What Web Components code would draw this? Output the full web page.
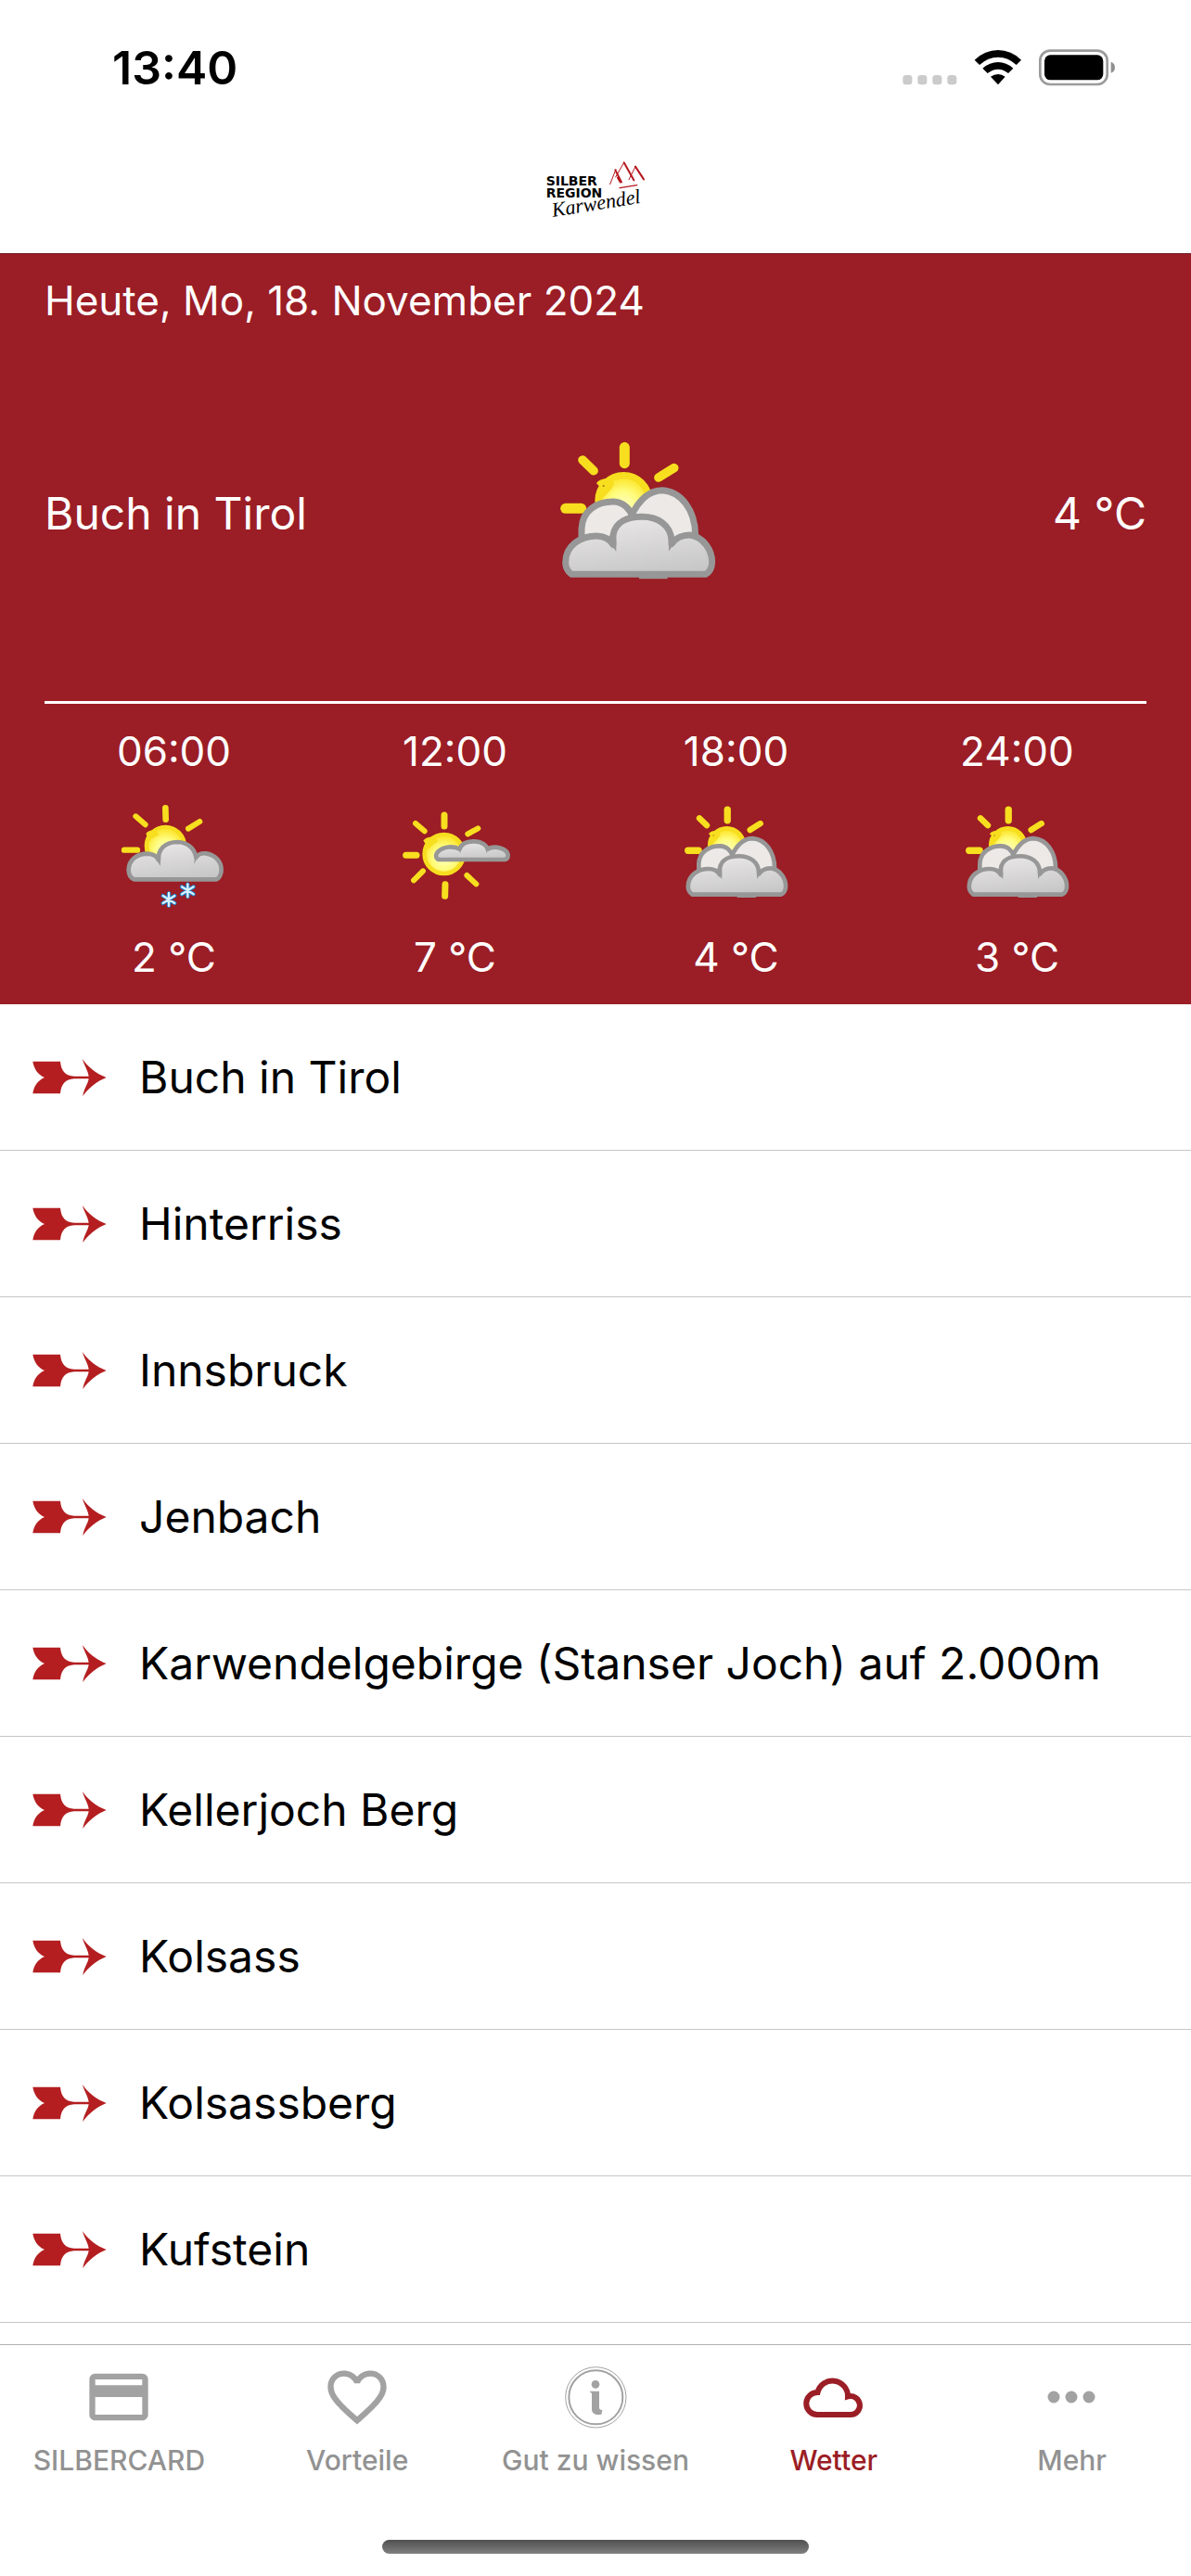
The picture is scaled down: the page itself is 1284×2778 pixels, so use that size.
<!DOCTYPE html>
<html lang="de">
<head>
<meta charset="utf-8">
<meta name="viewport" content="width=device-width, initial-scale=1">
<title>Wetter</title>
<style>
  body {
    margin: 0;
    background: #fff;
    color: #000;
    font-family: Inter, "Liberation Sans", sans-serif;
  }
</style>
</head>
<body>
<weather-app></weather-app>

<script>
// Helper: attach an open shadow root filled from a template
function render(host, html) {
  const template = document.createElement("template");
  template.innerHTML = html;
  host.attachShadow({ mode: "open" });
  host.shadowRoot.appendChild(template.content.cloneNode(true));
}

const SUN_FILL = `
  <radialGradient id="sun" cx="50%" cy="60%" r="50%">
    <stop offset="0" stop-color="#ffffc4"/>
    <stop offset="0.6" stop-color="#fffc7c"/>
    <stop offset="1" stop-color="#fde93a"/>
  </radialGradient>
  <linearGradient id="cloud" x1="0.3" y1="0" x2="0.6" y2="1">
    <stop offset="0" stop-color="#e9e7e8"/>
    <stop offset="1" stop-color="#c8c7c8"/>
  </linearGradient>`;

const WEATHER_ICONS = {
  cloudy: `
    <svg viewBox="23 12 540 540" aria-hidden="true">
      <defs>${SUN_FILL}</defs>
      <g stroke="#f7de1f" stroke-linecap="round" fill="none">
        <path stroke-width="33" d="M249 67V119"/>
        <path stroke-width="29" d="M113 108L149 143M359 165L409 134"/>
        <path stroke-width="33" d="M58 265H109"/>
      </g>
      <circle cx="246" cy="240" r="82" fill="url(#sun)" stroke="#f7de1f" stroke-width="22"/>
      <path d="M158 184C166 170 200 158 216 186C204 212 184 220 176 238L160 226L170 196Z" fill="#f7de1f"/>
      <circle cx="181" cy="192" r="3" fill="#9c7a1c"/>
      <g stroke="#979797" stroke-width="21" stroke-linejoin="round">
        <path fill="#ece9e7" d="M270 400V290C290 248 322 206 372 206C430 210 478 268 478 352V400Z"/>
        <path fill="#ece9e7" d="M110 400V330C112 272 160 242 214 243C246 244 266 268 274 290V400Z"/>
        <path fill="url(#cloud)" d="M78 478C64 468 58 454 58 440C58 384 108 354 158 354C184 354 202 366 212 382V352C218 308 260 292 306 292C356 292 398 318 401 368V380C414 360 438 350 462 351C506 358 532 402 532 438C532 458 522 474 510 478Z"/>
      </g>
      <path fill="#979797" d="M200 352L222 372V404Q206 386 192 364ZM392 354L412 364L416 374Q400 388 392 404ZM296 484h92v9h-92Z"/>
    </svg>`,
  snow: `
    <svg viewBox="22 33 360 360" aria-hidden="true">
      <defs>${SUN_FILL}</defs>
      <g stroke="#f7de1f" stroke-linecap="round" fill="none">
        <path stroke-width="20" d="M173 64L174 101"/>
        <path stroke-width="18" d="M77 91L108 118M247 131L284 108"/>
        <path stroke-width="19" d="M40 200H82"/>
      </g>
      <circle cx="173" cy="187" r="61" fill="url(#sun)" stroke="#f7de1f" stroke-width="14"/>
      <path d="M110 146C126 130 142 136 153 150C138 160 126 162 120 174Z" fill="#f7de1f"/>
      <path fill="url(#cloud)" stroke="#979797" stroke-width="14" stroke-linejoin="round" d="M72 295C60 290 54 278 54 264C55 230 82 212 116 212C134 213 146 222 151 232C148 198 172 174 212 174C246 175 268 196 272 224C280 212 292 210 304 211C334 215 354 238 354 264C354 280 346 292 338 295Z"/>
      <path fill="#979797" d="M146 214L157 224V252Q148 238 140 226ZM268 212L278 222Q272 234 266 246Z"/>
      <g fill="none" stroke-linecap="round">
        <g stroke="#1b7fc8" stroke-width="13">
          <path d="M184 340V380M165 348L203 372M203 348L165 372M245 311V351M226 319L264 343M264 319L226 343"/>
        </g>
        <g stroke="#d8f1ff" stroke-width="7">
          <path d="M184 339V381M165 348L203 372M203 348L165 372M245 310V352M226 319L264 343M264 319L226 343"/>
        </g>
      </g>
    </svg>`,
  sunny: `
    <svg viewBox="4 0 360 360" aria-hidden="true">
      <defs>${SUN_FILL}</defs>
      <g stroke="#f7de1f" stroke-linecap="round" fill="none">
        <path stroke-width="21" d="M148 54V90M151 278L150 316"/>
        <path stroke-width="18" d="M55 81L84 106M224 115L257 97M49 265L79 235M221 249L251 277"/>
        <path stroke-width="21" d="M24 184H58"/>
      </g>
      <circle cx="147" cy="180" r="63" fill="url(#sun)" stroke="#f7de1f" stroke-width="14"/>
      <path d="M80 136C98 118 118 126 128 138C112 150 104 154 98 166Z" fill="#f7de1f"/>
      <path fill="url(#cloud)" stroke="#979797" stroke-width="14" stroke-linejoin="round" d="M130 198C120 194 118 180 128 172C144 156 178 152 198 164C204 144 222 138 246 139C268 140 284 150 288 164C312 150 350 162 354 182C354 192 350 197 344 198Z"/>
      <path fill="#979797" d="M190 158L202 164L200 178ZM282 158L292 164L284 178Z"/>
    </svg>`,
};

const TAB_ICONS = {
  card: `<svg viewBox="0 0 24 24" aria-hidden="true"><path fill="currentColor" d="M20 4H4c-1.110 0-1.990.890-1.990 2L2 18c0 1.110.890 2 2 2h16c1.110 0 2-.890 2-2V6c0-1.110-.890-2-2-2zm0 14H4v-6h16v6zm0-10H4V6h16v2z"/></svg>`,
  heart: `<svg viewBox="0 0 24 24" aria-hidden="true"><path fill="currentColor" d="M16.500 3c-1.740 0-3.410.810-4.500 2.090C10.910 3.810 9.240 3 7.500 3 4.420 3 2 5.420 2 8.500c0 3.780 3.400 6.860 8.550 11.540L12 21.350l1.450-1.320C18.600 15.360 22 12.280 22 8.500 22 5.420 19.580 3 16.500 3zm-4.400 15.550l-.100.100-.100-.100C7.140 14.240 4 11.390 4 8.500 4 6.500 5.500 5 7.500 5c1.540 0 3.040.990 3.570 2.360h1.870C13.460 5.990 14.960 5 16.500 5c2 0 3.500 1.500 3.500 3.500 0 2.890-3.140 5.740-7.900 10.050z"/></svg>`,
  info: `<svg viewBox="12 21 228 228" aria-hidden="true">
    <g fill="none" stroke="currentColor"><circle cx="127" cy="136" r="98" stroke-width="3"/><circle cx="127" cy="136" r="87" stroke-width="6"/></g>
    <circle cx="126" cy="94" r="13" fill="currentColor"/>
    <path fill="currentColor" d="M108 116H138V168C138 174 140 177 148 177L145 191C128 194 114 190 114 174V124Q112 119 108 119Z"/>
  </svg>`,
  cloud: `<svg viewBox="0 0 76 76" aria-hidden="true"><path fill="none" stroke="currentColor" stroke-width="6" d="M20 57A12 12 0 0 1 20.500 33A16.500 16.500 0 0 1 53 37.500A10 10 0 1 1 55 57Z"/></svg>`,
  more: `<svg viewBox="0 0 76 76" aria-hidden="true"><g fill="currentColor"><circle cx="18" cy="38" r="6.500"/><circle cx="37" cy="38" r="6.500"/><circle cx="56" cy="38" r="6.500"/></g></svg>`,
};

class StatusBar extends HTMLElement {
  constructor() {
    super();
    render(this, `
      <style>
        :host {
          display: flex;
          justify-content: space-between;
          align-items: center;
          height: 146px;
          padding: 0 81px 0 121px;
          flex: none;
        }
        .time {
          font-size: 50px;
          font-weight: 600;
          line-height: 60px;
        }
        .icons {
          display: flex;
          align-items: center;
          gap: 17px;
        }
        svg { display: block; }
      </style>
      <span class="time">13:40</span>
      <div class="icons">
        <svg width="60" height="40" viewBox="38 38 180 120" role="img" aria-label="Kein Netz">
          <g fill="#cbcbcb">
            <rect x="39" y="122" width="30" height="31" rx="10"/>
            <rect x="87" y="122" width="30" height="31" rx="10"/>
            <rect x="135" y="122" width="30" height="31" rx="10"/>
            <rect x="183" y="122" width="30" height="31" rx="10"/>
          </g>
        </svg>
        <svg width="52" height="40" viewBox="269 38 156 120" role="img" aria-label="WLAN">
          <path d="M271 73Q304 41 347 41T422 73L406 89Q380 64 347 64T287 89ZM297 100Q320 80 347 80T396 100L380 116Q364 103 347 103T313 116ZM323 127Q334 119 347 119T370 127L347 153Z"/>
        </svg>
        <svg width="84" height="40" viewBox="477 38 252 120" role="img" aria-label="Akku">
          <rect x="484" y="43" width="217" height="109" rx="32" fill="none" stroke="#9b9b9b" stroke-width="8"/>
          <rect x="498" y="57" width="190" height="81" rx="19"/>
          <path fill="#8f8f8f" d="M713 79Q726 84 726 97T713 115Z"/>
        </svg>
      </div>
    `);
  }
}
customElements.define("status-bar", StatusBar);

class BrandHeader extends HTMLElement {
  constructor() {
    super();
    render(this, `
      <style>
        :host {
          display: flex;
          justify-content: center;
          align-items: center;
          height: 127px;
          flex: none;
        }
        svg { display: block; }
        .caps {
          font-family: "DejaVu Sans", sans-serif;
          font-size: 42px;
          font-weight: 700;
        }
        .script {
          font-family: "Liberation Serif", serif;
          font-style: italic;
          font-size: 66px;
        }
      </style>
      <svg width="140" height="90" viewBox="6 14 420 270" role="img" aria-label="Silberregion Karwendel">
        <text class="caps" x="56" y="118">SILBER</text>
        <text class="caps" x="56" y="159">REGION</text>
        <text class="script" x="78" y="221" transform="rotate(-9 78 221)">Karwendel</text>
        <g fill="none" stroke="#b5171d" stroke-linecap="round">
          <path stroke-width="3" d="M263 115L282 67M281 92L308 45M324 100L345 58"/>
          <path stroke-width="6" d="M280 69L300 108M308 45L340 102M345 58L372 99M288 94L296 108"/>
          <path stroke-width="4" d="M294 127L350 118"/>
        </g>
      </svg>
    `);
  }
}
customElements.define("brand-header", BrandHeader);

class WeatherIcon extends HTMLElement {
  constructor() {
    super();
    render(this, `
      <style>
        :host {
          display: block;
          width: 120px;
          height: 120px;
        }
        svg {
          display: block;
          width: 100%;
          height: 100%;
        }
      </style>
      ${WEATHER_ICONS[this.getAttribute("type")]}
    `);
  }
}

class ForecastHour extends HTMLElement {
  constructor() {
    super();
    render(this, `
      <style>
        :host {
          display: flex;
          flex-direction: column;
          align-items: center;
          gap: 24px;
          font-size: 44px;
          line-height: 54px;
        }
      </style>
      <span>${this.getAttribute("time")}</span>
      <weather-icon type="${this.getAttribute("type")}"></weather-icon>
      <span><slot></slot></span>
    `);
  }
}

class WeatherToday extends HTMLElement {
  constructor() {
    super();
    render(this, `
      <style>
        :host {
          display: block;
          background: #9b1d25;
          color: #fff;
          padding: 23px 36px 24px;
          border-top: 1px solid #6e1a20;
          flex: none;
        }
        .date {
          margin: 0 12px;
          font-size: 44px;
          line-height: 54px;
          font-weight: 400;
        }
        .current {
          display: grid;
          grid-template-columns: 4fr 6fr 3fr;
          align-items: center;
          height: 405px;
          margin: 0 12px;
          border-bottom: 3px solid #fff;
          font-size: 48px;
          line-height: 60px;
        }
        .current weather-icon {
          width: 180px;
          height: 180px;
          justify-self: center;
        }
        .temp { text-align: right; }
        .hours {
          display: grid;
          grid-template-columns: repeat(4, 1fr);
          padding-top: 24px;
        }
      </style>
      <h1 class="date">Heute, Mo, 18. November 2024</h1>
      <div class="current">
        <span>Buch in Tirol</span>
        <weather-icon type="cloudy"></weather-icon>
        <span class="temp">4 °C</span>
      </div>
      <div class="hours">
        <forecast-hour time="06:00" type="snow">2 °C</forecast-hour>
        <forecast-hour time="12:00" type="sunny">7 °C</forecast-hour>
        <forecast-hour time="18:00" type="cloudy">4 °C</forecast-hour>
        <forecast-hour time="24:00" type="cloudy">3 °C</forecast-hour>
      </div>
    `);
  }
}

class PlaceRow extends HTMLElement {
  constructor() {
    super();
    render(this, `
      <style>
        :host {
          display: block;
          border-bottom: 1px solid #c6c6c6;
        }
        a {
          display: flex;
          align-items: center;
          gap: 34px;
          height: 157px;
          padding: 0 34px;
          color: inherit;
          text-decoration: none;
          font-size: 48px;
          line-height: 60px;
        }
        svg { flex: none; }
      </style>
      <a href="#">
        <svg width="82" height="42" viewBox="102 183 246 126" aria-hidden="true">
          <path fill="#b41e20" d="M106 194H195C198 226 212 240 240 242H287C284 222 272 208 267 186C284 212 312 234 344 246C314 258 286 280 268 306C271 284 284 268 287 250H240C212 252 198 266 195 298H106C110 272 122 256 144 246C122 236 110 218 106 194Z"/>
        </svg>
        <slot></slot>
      </a>
    `);
  }
}

class PlaceList extends HTMLElement {
  constructor() {
    super();
    render(this, `
      <style>
        :host {
          display: block;
          flex: 1;
          min-height: 0;
          overflow: hidden;
        }
      </style>
      <slot></slot>
    `);
  }
}

class TabItem extends HTMLElement {
  constructor() {
    super();
    render(this, `
      <style>
        :host {
          display: block;
          color: #929292;
          --icon: #a2a2a2;
        }
        :host([active]) {
          color: #9b1d25;
          --icon: #9b1d25;
        }
        a {
          display: flex;
          flex-direction: column;
          align-items: center;
          gap: 12px;
          color: inherit;
          text-decoration: none;
          font-size: 30px;
          font-weight: 500;
          line-height: 36px;
          white-space: nowrap;
        }
        svg {
          display: block;
          width: 76px;
          height: 76px;
          color: var(--icon);
        }
      </style>
      <a href="#">
        ${TAB_ICONS[this.getAttribute("icon")]}
        <span><slot></slot></span>
      </a>
    `);
  }
}

class TabBar extends HTMLElement {
  constructor() {
    super();
    render(this, `
      <style>
        :host {
          display: flex;
          flex-direction: column;
          justify-content: space-between;
          align-items: center;
          box-sizing: border-box;
          height: 250px;
          padding: 18px 0 24px;
          border-top: 1px solid #b2b2b2;
          background: #fff;
          flex: none;
        }
        nav {
          display: grid;
          grid-template-columns: repeat(5, 1fr);
          width: 100%;
        }
        .home {
          width: 460px;
          height: 15px;
          border-radius: 8px;
          background: linear-gradient(#505050, #808080);
        }
      </style>
      <nav><slot></slot></nav>
      <div class="home"></div>
    `);
  }
}

class WeatherApp extends HTMLElement {
  constructor() {
    super();
    const places = [
      "Buch in Tirol",
      "Hinterriss",
      "Innsbruck",
      "Jenbach",
      "Karwendelgebirge (Stanser Joch) auf 2.000m",
      "Kellerjoch Berg",
      "Kolsass",
      "Kolsassberg",
      "Kufstein",
    ];
    render(this, `
      <style>
        :host {
          display: flex;
          flex-direction: column;
          height: 100vh;
        }
      </style>
      <status-bar></status-bar>
      <brand-header></brand-header>
      <weather-today></weather-today>
      <place-list>
        ${places.map((place) => `<place-row>${place}</place-row>`).join("")}
      </place-list>
      <tab-bar>
        <tab-item icon="card">SILBERCARD</tab-item>
        <tab-item icon="heart">Vorteile</tab-item>
        <tab-item icon="info">Gut zu wissen</tab-item>
        <tab-item icon="cloud" active>Wetter</tab-item>
        <tab-item icon="more">Mehr</tab-item>
      </tab-bar>
    `);
  }
}

customElements.define("weather-icon", WeatherIcon);
customElements.define("forecast-hour", ForecastHour);
customElements.define("weather-today", WeatherToday);
customElements.define("place-row", PlaceRow);
customElements.define("place-list", PlaceList);
customElements.define("tab-item", TabItem);
customElements.define("tab-bar", TabBar);
customElements.define("weather-app", WeatherApp);
</script>
</body>
</html>
